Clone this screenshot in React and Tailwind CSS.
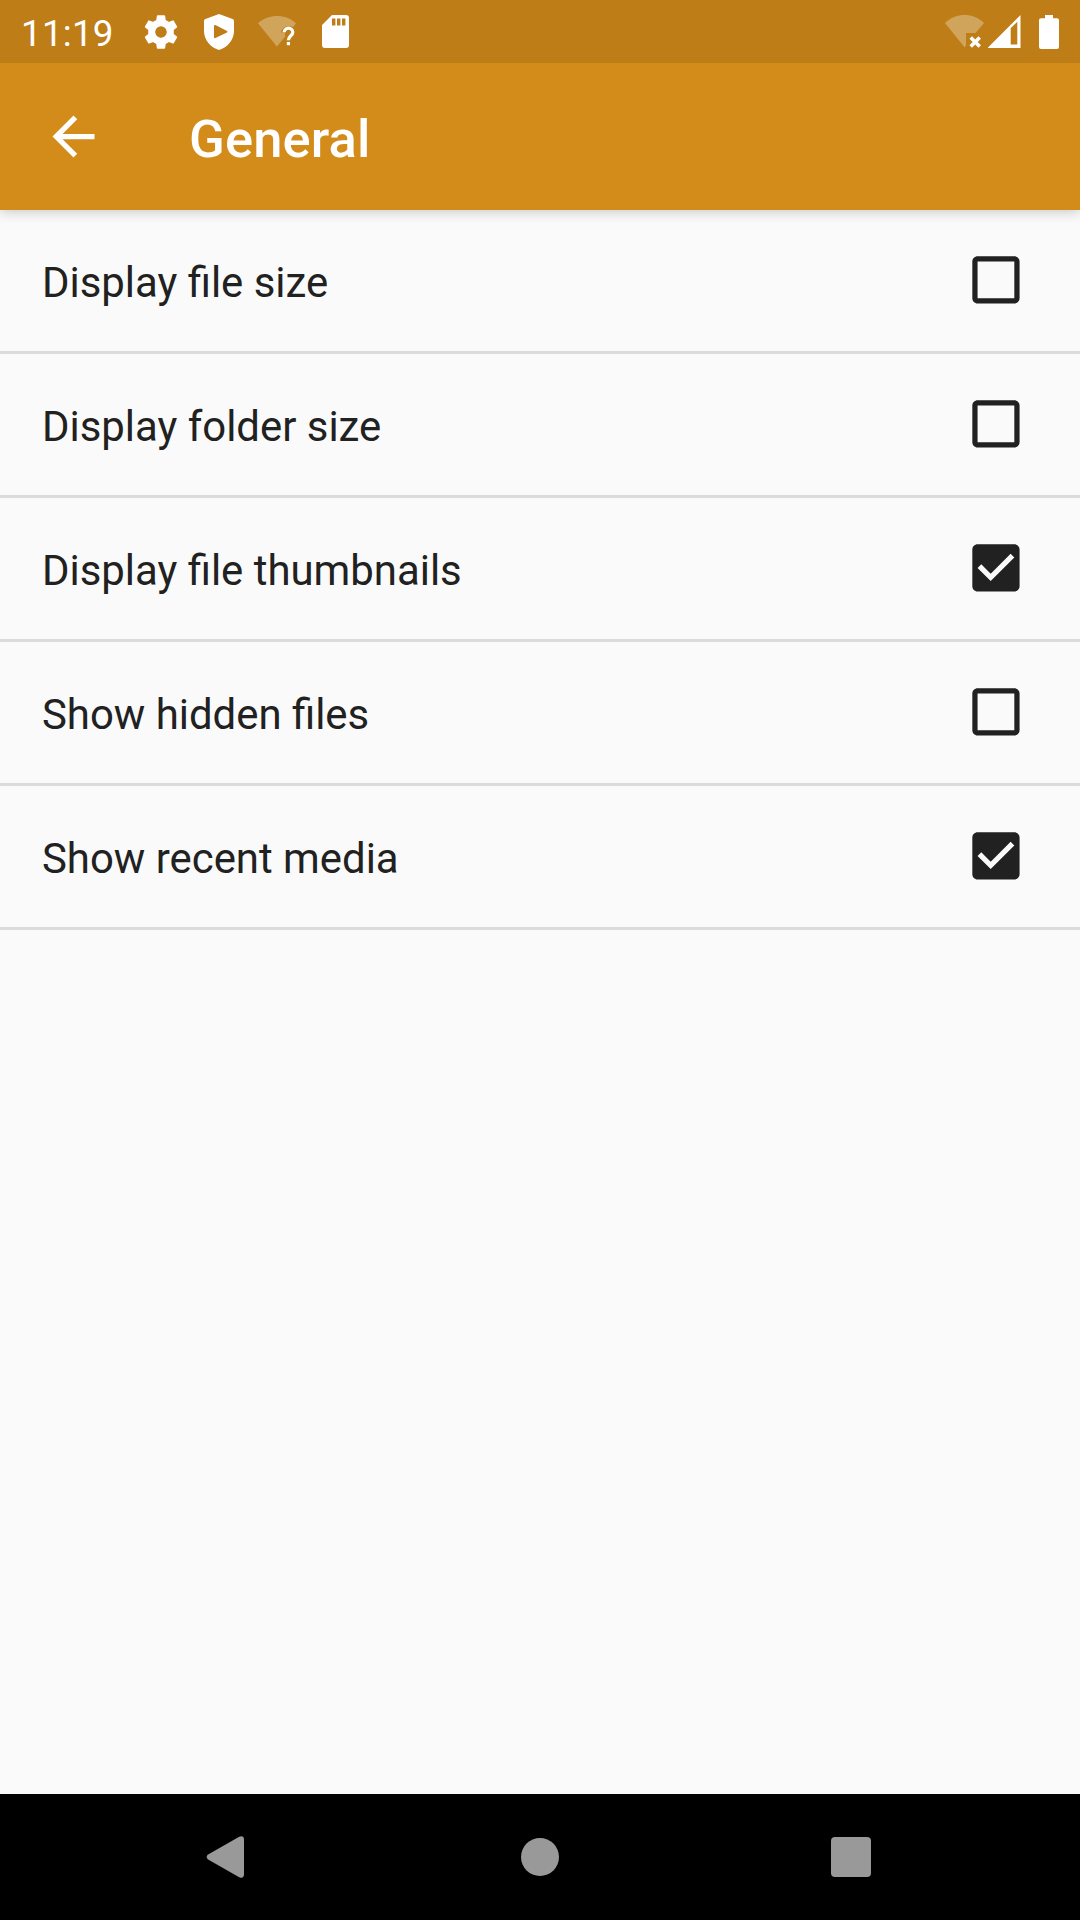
import React from 'react';

const settings = [
  { label: 'Display file size', checked: false },
  { label: 'Display folder size', checked: false },
  { label: 'Display file thumbnails', checked: true },
  { label: 'Show hidden files', checked: false },
  { label: 'Show recent media', checked: true },
];

function GearIcon() {
  return (
    <svg className="h-[40px] w-[40px]" viewBox="0 0 24 24" fill="white">
      <path d="M19.43 12.98c.04-.32.07-.64.07-.98s-.03-.66-.07-.98l2.11-1.65c.19-.15.24-.42.12-.64l-2-3.46c-.12-.22-.39-.3-.61-.22l-2.49 1c-.52-.4-1.08-.73-1.69-.98l-.38-2.65C14.46 2.18 14.25 2 14 2h-4c-.25 0-.46.18-.49.42l-.38 2.65c-.61.25-1.17.59-1.69.98l-2.49-1c-.23-.09-.49 0-.61.22l-2 3.46c-.13.22-.07.49.12.64l2.11 1.65c-.04.32-.07.65-.07.98s.03.66.07.98l-2.11 1.65c-.19.15-.24.42-.12.64l2 3.46c.12.22.39.3.61.22l2.49-1c.52.4 1.08.73 1.69.98l.38 2.65c.03.24.24.42.49.42h4c.25 0 .46-.18.49-.42l.38-2.65c.61-.25 1.17-.59 1.69-.98l2.49 1c.23.09.49 0 .61-.22l2-3.46c.12-.22.07-.49-.12-.64l-2.11-1.65zM12 15.5c-1.93 0-3.5-1.57-3.5-3.5s1.57-3.5 3.5-3.5 3.5 1.57 3.5 3.5-1.57 3.5-3.5 3.5z" />
      <circle cx="12" cy="12" r="5.6" fill="none" stroke="white" strokeWidth="4" />
    </svg>
  );
}

function ShieldIcon() {
  return (
    <svg className="h-[36px] w-[30px]" viewBox="0 0 30 36" fill="white" fillRule="evenodd">
      <path d="M15 0L28.6 5.1Q30 5.6 30 7.1V17C30 25.8 23.6 33.5 15 36C6.4 33.5 0 25.8 0 17V7.1Q0 5.6 1.4 5.1ZM10 12.2V23.2Q10 24.8 11.4 24.1L23 18.4Q24 17.7 23 17.1L11.4 11.1Q10 10.5 10 12.2Z" />
    </svg>
  );
}

function WifiUnknownIcon() {
  return (
    <svg className="h-[32px] w-[39px]" viewBox="0 0 39 32" fill="none">
      <path d="M0 7.2C11-2.4 27.4-2.4 38 7.2L35 10.9C31 8.4 23.5 10.6 23.2 16.5H27V20.7L18.9 30.6Z" fill="white" fillOpacity="0.3" />
      <path d="M26.2 16.2A4.3 4.1 0 1 1 34.8 16.2C34.8 19.6 30.4 20 30.4 24.2" stroke="white" strokeWidth="3.2" />
      <path d="M28.8 26H32V29.2H28.8Z" fill="white" />
    </svg>
  );
}

function SdCardIcon() {
  return (
    <svg className="h-[33px] w-[27px]" viewBox="0 0 27 33" fill="white" fillRule="evenodd">
      <path d="M10 0H24Q27 0 27 3V30Q27 33 24 33H3Q0 33 0 30V10ZM10 3.5V10.5H13.4V3.5ZM15 3.5V10.5H18.4V3.5ZM20 3.5V10.5H23.4V3.5Z" />
    </svg>
  );
}

function WifiOffIcon() {
  return (
    <svg className="h-[33px] w-[39px]" viewBox="0 0 39 33" fill="none">
      <path d="M0 8C11-2.6 28-2.6 39 8L30.5 18H21V30.2L19.5 32.2Z" fill="white" fillOpacity="0.3" />
      <path d="M25.7 22.4L34.7 31.4M34.7 22.4L25.7 31.4" stroke="white" strokeWidth="3.6" />
    </svg>
  );
}

function SignalIcon() {
  return (
    <svg className="h-[33px] w-[33px]" viewBox="0 0 33 33" fill="white" fillRule="evenodd">
      <path d="M32.5 0V33H-.5ZM22.7 13.3V29.5H29.3V6.7Z" />
    </svg>
  );
}

function BatteryIcon() {
  return (
    <svg className="h-[34px] w-[20px]" viewBox="0 0 20 34" fill="white">
      <path d="M6 0H14V3.3H18Q20 3.3 20 5.3V32Q20 34 18 34H2Q0 34 0 32V5.3Q0 3.3 2 3.3H6Z" />
    </svg>
  );
}

function StatusBar() {
  return (
    <div className="relative z-10 flex h-[63px] items-center bg-[#be7d16] text-white">
      <span className="w-[141px] pt-[5px] pl-[21px] text-[36.75px] leading-none tracking-[0.25px]">11:19</span>
      <GearIcon />
      <div className="ml-[23px] pt-[1px]">
        <ShieldIcon />
      </div>
      <div className="ml-[24px] pt-[1px]">
        <WifiUnknownIcon />
      </div>
      <div className="ml-[25px]">
        <SdCardIcon />
      </div>
      <div className="mr-[21px] ml-auto flex items-start">
        <WifiOffIcon />
        <div className="ml-[4px]">
          <SignalIcon />
        </div>
        <div className="ml-[18px]">
          <BatteryIcon />
        </div>
      </div>
    </div>
  );
}

function AppBar() {
  return (
    <header className="relative flex h-[147px] items-center bg-[#d38b19] pl-[42px] text-white shadow-[0_2px_12px_rgba(0,0,0,0.2)]">
      <button aria-label="Back" className="h-[63px] w-[63px]">
        <svg className="h-[63px] w-[63px]" viewBox="0 0 24 24" fill="white">
          <path d="M20 11H7.83l5.59-5.59L12 4l-8 8 8 8 1.41-1.41L7.83 13H20v-2z" />
        </svg>
      </button>
      <h1 className="pt-[5px] pl-[84px] text-[52.5px] leading-none font-medium tracking-[0.15px]">General</h1>
    </header>
  );
}

function Checkbox({ checked }) {
  return (
    <svg className="h-[63px] w-[63px]" viewBox="-0.17 -0.17 24 24" fill="#212121" role="checkbox" aria-checked={checked}>
      {checked ? (
        <path d="M19 3H5c-1.11 0-2 .9-2 2v14c0 1.1.89 2 2 2h14c1.11 0 2-.9 2-2V5c0-1.1-.89-2-2-2zm-9 14l-5-5 1.41-1.41L10 14.17l7.59-7.59L19 8l-9 9z" />
      ) : (
        <path d="M19 5v14H5V5h14m0-2H5c-1.1 0-2 .9-2 2v14c0 1.1.9 2 2 2h14c1.1 0 2-.9 2-2V5c0-1.1-.9-2-2-2z" />
      )}
    </svg>
  );
}

function SettingRow({ label, checked }) {
  return (
    <li className="flex h-[144px] items-center justify-between border-b-[3px] border-[#dbdbdb] pr-[53px] pb-[2px] pl-[42px]">
      <span className="pt-[7px] text-[41.9px] leading-[42px] text-[#212121]">{label}</span>
      <Checkbox checked={checked} />
    </li>
  );
}

function NavigationBar() {
  return (
    <nav className="flex h-[126px] items-center bg-black pl-[206px]">
      <svg className="h-[42px] w-[38px]" viewBox="0 0 38 43" preserveAspectRatio="none" fill="#999999">
        <path d="M1.7 19.3L33.2.8Q37.8-1 38 3.5V39.5Q37.8 44 33.2 42.2L1.7 23.7Q-.3 21.5 1.7 19.3Z" />
      </svg>
      <div className="ml-[277px] h-[38px] w-[38px] rounded-full bg-[#999999]" />
      <div className="ml-[272px] h-[40px] w-[40px] rounded-[4px] bg-[#999999]" />
    </nav>
  );
}

export default function App() {
  return (
    <div className="flex h-[1920px] w-[1080px] flex-col bg-[#fafafa] font-['Roboto',sans-serif]">
      <StatusBar />
      <AppBar />
      <ul className="flex-1">
        {settings.map((item) => (
          <SettingRow key={item.label} label={item.label} checked={item.checked} />
        ))}
      </ul>
      <NavigationBar />
    </div>
  );
}
